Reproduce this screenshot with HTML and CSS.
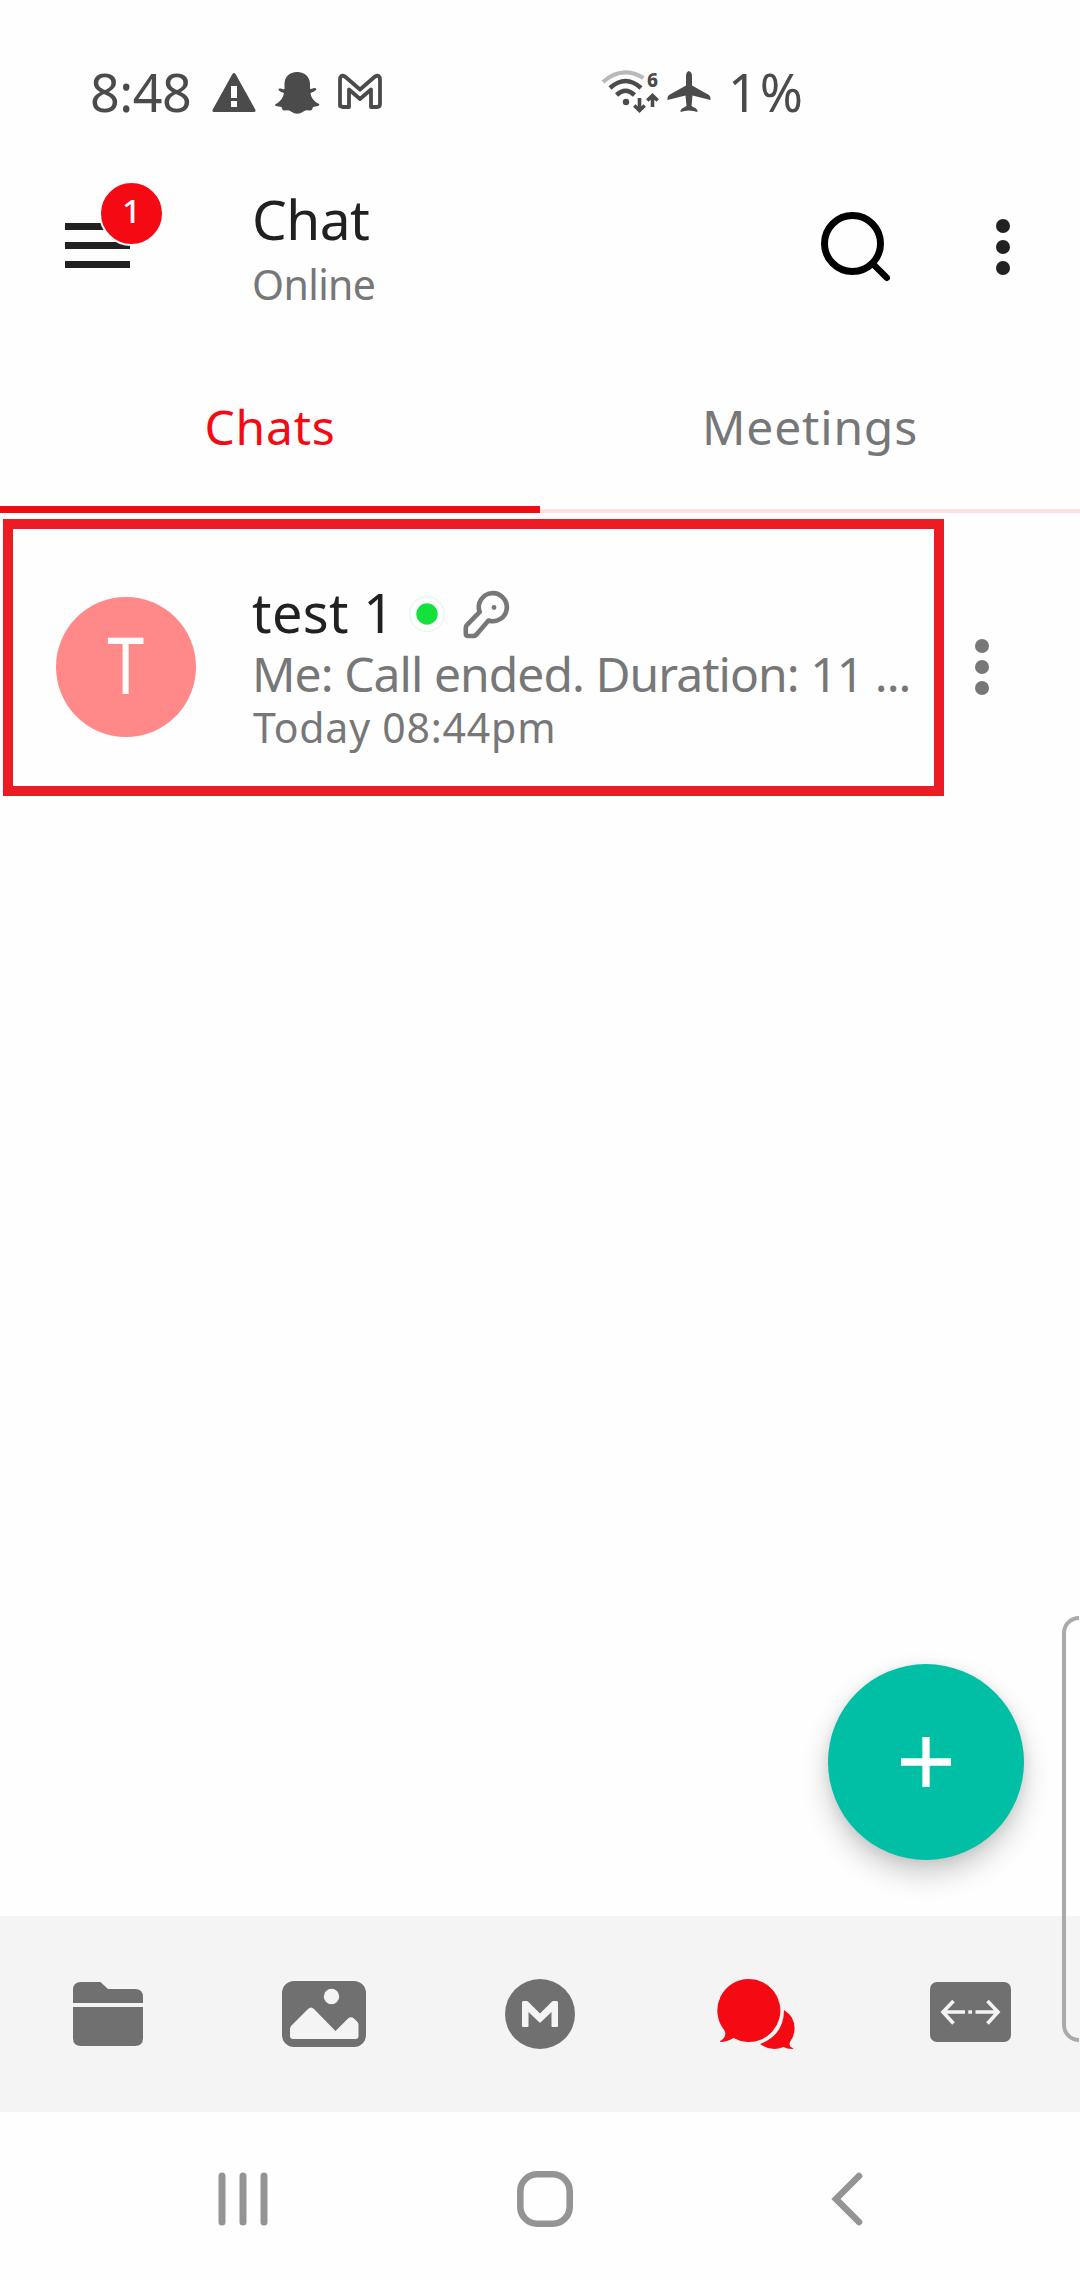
FILE: index.html
```
<!DOCTYPE html>
<html lang="en">
<head>
<meta charset="utf-8">
<title>Chat</title>
<link rel="stylesheet" href="styles.css">
</head>
<body>
<div class="screen">
  <div class="status">
    <span class="clock">8:48</span>
    <svg class="warn" width="44" height="42" viewBox="0 0 44 42">
      <path fill="currentColor" fill-rule="evenodd" d="M20.3 2.2Q22 -.4 23.7 2.2L43.4 37.8Q44 40 42 40H2Q0 40 .6 37.8ZM19 14V26H25V14ZM19 29V35H25V29Z"/>
    </svg>
    <svg class="snap" width="46" height="44" viewBox="0 0 46 44">
      <path fill="currentColor" d="M23.200 1C31 1 36 6 36 13V18Q38 18 40 17Q43 17 42 19Q40 21 36.500 22Q37 29 45 33Q46 34 44 35L39 36Q38 40 36 39.500Q32 38.500 29.500 40.500Q23.200 45 17 40.500Q14.500 38.500 10.500 39.500Q8.500 40 7.500 36L2 35Q0 34 2 33Q9 29 10 22Q6 21 4.500 19Q4 17 7 17.500Q9 18.500 10.500 18V13C10.500 6 15 1 23.200 1Z"/>
    </svg>
    <svg class="mail" width="46" height="38" viewBox="0 0 46 38">
      <path fill="none" stroke="currentColor" stroke-width="3.800" stroke-linejoin="round" d="M3 33V7Q3 1 8 3.500L23 16.500L38 3.500Q43 1 43 7V31Q43 34 40 34H34V16.500L23 26L12 16.500V34H6Q3 34 3 31Z"/>
    </svg>
    <svg class="wifi" width="59" height="44" viewBox="0 0 59 44">
      <g fill="none" stroke="currentColor">
        <path stroke="#b9b9b9" stroke-width="4" d="M2 12Q21 -5 42.500 8"/>
        <path stroke-width="4.500" d="M9 18Q24.500 4 40 18"/>
        <path stroke-width="4.500" d="M15.500 25Q24.500 16.500 33.500 25"/>
        <path stroke-width="3.600" d="M38.500 28V40M33.300 35.500L38.500 40.500L43.700 35.500M51.500 37V25M46.300 30.500L51.500 25.500L56.700 30.500"/>
      </g>
      <circle cx="25" cy="32" r="3.200" fill="currentColor"/>
      <text class="wifi-gen" x="46" y="17">6</text>
    </svg>
    <svg class="plane" width="46" height="44" viewBox="0 0 46 44">
      <path fill="currentColor" d="M22.800 1Q26 2 26 6V15.500L43 25Q45 26.500 44.500 30L26.500 25.500L25.500 36L30 38.500Q32 40 31.500 42Q22.800 39 14.500 42Q14 40 16 38.500L20.500 36L19.500 25.500L1.500 30Q1 26.500 3 25L20 15.500V6Q20 2 22.800 1Z"/>
    </svg>
    <span class="battery">1%</span>
  </div>

  <header class="appbar">
    <div class="menu">
      <span class="bar"></span><span class="bar"></span><span class="bar"></span>
      <span class="badge">1</span>
    </div>
    <div class="titles">
      <div class="title">Chat</div>
      <div class="subtitle">Online</div>
    </div>
    <svg class="search" width="70" height="72" viewBox="0 0 70 72">
      <g fill="none" stroke="#000" stroke-width="7">
        <circle cx="32.500" cy="32.500" r="28"/>
        <path stroke-linecap="round" stroke-width="6.400" d="M54 54L66.800 66.800"/>
      </g>
    </svg>
    <div class="dots dots-dark"><i></i><i></i><i></i></div>
  </header>

  <nav class="tabs">
    <div class="tab tab-active">Chats</div>
    <div class="tab">Meetings</div>
  </nav>

  <main class="list">
    <div class="row">
      <div class="chat">
        <div class="avatar"><span class="initial">T</span></div>
        <div class="info">
          <div class="name-line">
            <span class="name">test 1</span>
            <svg class="presence" width="36" height="38" viewBox="0 0 36 38">
              <ellipse cx="18" cy="19" rx="17.300" ry="17.300" fill="none" stroke="#c5f5ce" stroke-width=".7"/>
              <circle cx="18" cy="19" r="10.700" fill="#12e23b"/>
            </svg>
            <svg class="key" width="50" height="50" viewBox="0 0 50 50">
              <path fill="none" stroke="#777" stroke-width="4.600" stroke-linejoin="round" d="M17.500 21.500A14 14 0 1 1 26.500 30.500L14.500 44.500Q13 46 11.500 46H6Q3.800 46 3.800 43.500V37.500Q3.800 36 5 34.800L17.800 21.800Z"/>
              <circle cx="32" cy="17.500" r="2.400" fill="#777"/>
            </svg>
          </div>
          <div class="message">Me: Call ended. Duration: 11 ...</div>
          <div class="time">Today 08:44pm</div>
        </div>
      </div>
      <div class="dots dots-grey"><i></i><i></i><i></i></div>
    </div>
  </main>

  <nav class="bottom">
    <div class="item">
      <svg width="70" height="64" viewBox="0 0 70 64">
        <path fill="currentColor" d="M0 21V8Q0 0 8 0H27.500L35 7H62Q70 7 70 15V21ZM0 25H70V56Q70 64 62 64H8Q0 64 0 56Z"/>
      </svg>
    </div>
    <div class="item">
      <svg width="84" height="66" viewBox="0 0 84 66">
        <rect width="84" height="66" rx="12" fill="currentColor"/>
        <circle cx="49.500" cy="15.500" r="7.700" fill="#f4f4f4"/>
        <path fill="#f4f4f4" d="M8 48Q8 46 9.500 44.500L26 28Q29 25 32 28L53.500 50L66 37.500Q69 35 72 37.500L75.500 41Q76.500 42 76.500 44V55Q76.500 58 73.500 58H11Q8 58 8 55Z"/>
      </svg>
    </div>
    <div class="item">
      <svg width="70" height="70" viewBox="0 0 70 70">
        <circle cx="35" cy="35" r="35" fill="currentColor"/>
        <path fill="#f4f4f4" d="M17 23.500Q17 22 18.500 22H21.500Q22.500 22 23.500 23L35 34.500L46.500 23Q47.500 22 48.500 22H51.500Q53 22 53 23.500V47Q53 48 52 48H47.500Q46.500 48 46.500 47V33L36 43Q35 44 34 43L23.500 33V47Q23.500 48 22.500 48H18Q17 48 17 47Z"/>
      </svg>
    </div>
    <div class="item item-active">
      <svg width="78" height="70" viewBox="0 0 78 70">
        <path fill="currentColor" d="M32 0A31.500 31.500 0 1 1 16.500 59Q10 63 3 63Q2.500 62 5 61Q10 57 7.500 51.500A31.500 31.500 0 0 1 32 0ZM67 31Q78 38 77.500 50Q77.500 57 73 63Q71.500 68 76 69Q77 70 75 70Q70 70 66.500 68Q54 73 43 65Q67 56 67 31Z"/>
      </svg>
    </div>
    <div class="item">
      <svg width="81" height="60" viewBox="0 0 81 60">
        <rect width="81" height="60" rx="7" fill="currentColor"/>
        <path fill="none" stroke="#f4f4f4" stroke-width="3.600" d="M35 30H13M23.500 19L13 30L23.500 41.500M38.300 30H42M45.500 30H68M57.500 19L68 30L57.500 41.500"/>
      </svg>
    </div>
  </nav>

  <footer class="system">
    <svg width="50" height="54" viewBox="0 0 50 54">
      <path stroke="currentColor" stroke-width="7" stroke-linecap="round" d="M4 4V50M25 4V50M46 4V50"/>
    </svg>
    <svg width="58" height="58" viewBox="0 0 58 58">
      <rect x="4.300" y="4.300" width="49.400" height="49.400" rx="17" fill="none" stroke="currentColor" stroke-width="6.600"/>
    </svg>
    <svg width="32" height="54" viewBox="0 0 32 54">
      <path fill="none" stroke="currentColor" stroke-width="6.600" stroke-linecap="round" d="M28 4L5 27L28 50"/>
    </svg>
  </footer>

  <button class="fab" aria-label="New chat">
    <svg width="50" height="50" viewBox="0 0 50 50"><path stroke="#fff" stroke-width="7.300" d="M25 0V50M0 25H50"/></svg>
  </button>
  <div class="edge"></div>
</div>
</body>
</html>
```
FILE: styles.css
```
* { box-sizing: border-box; }
body { margin: 0; background: #fff; font-family: "Noto Sans", "Open Sans", sans-serif; font-weight: 400; }
svg { display: block; flex: none; }
.screen { position: relative; display: flex; flex-direction: column; width: 1080px; height: 2280px; overflow: hidden; background: #fefefe; }

.status { display: flex; align-items: center; height: 160px; padding: 24px 0 0 90px; color: #4b4b4b; font-size: 52px; line-height: 60px; }
.clock { width: 122px; letter-spacing: -.5px; }
.warn { margin-top: 1px; }
.snap { margin: 1px 0 0 18px; }
.mail { margin-left: 17px; }
.wifi { margin-left: 218px; overflow: visible; }
.wifi-gen { font-size: 19px; font-weight: 800; fill: currentColor; }
.plane { margin-left: 6px; }
.battery { margin-left: 16px; letter-spacing: 2px; }

.appbar { display: flex; align-items: flex-start; height: 200px; color: #212121; }
.menu { position: relative; display: flex; flex-direction: column; gap: 12px; width: 65px; margin: 63px 0 0 65px; }
.bar { height: 7px; background: #212121; }
.badge { position: absolute; left: 34px; top: -42px; width: 65px; height: 65px; border: 2px solid #fefefe; border-radius: 50%; background: #f50a14; color: #fff; font-size: 33px; font-weight: 500; line-height: 56px; text-align: center; }
.titles { flex: 1; margin: 26px 0 0 122px; }
.title { font-size: 55px; line-height: 66px; letter-spacing: -.5px; }
.subtitle { font-size: 41px; line-height: 64px; letter-spacing: -.6px; color: #777; }
.search { margin-top: 51px; }
.dots { display: flex; flex-direction: column; gap: 7px; width: 14px; }
.dots i { height: 14px; border-radius: 50%; background: currentColor; }
.dots-dark { margin: 59px 70px 0 106px; }
.dots-grey { margin: 120px 0 0 31px; color: #777; }

.tabs { display: grid; grid-template-columns: 1fr 1fr; height: 153px; box-shadow: inset 0 -4px #fde0e1; }
.tab { padding-top: 37px; font-size: 48px; line-height: 60px; letter-spacing: .8px; text-align: center; color: #777; }
.tab-active { color: #f50a14; border-bottom: 7px solid #f50a14; }

.list { flex: 1; padding: 6px 0 0 3px; }
.row { display: flex; align-items: flex-start; }
.chat { display: flex; width: 941px; height: 277px; padding: 52px 0 0 43px; border: 10px solid #ed1c24; }
.avatar { display: flex; align-items: center; justify-content: center; width: 140px; height: 140px; margin-top: 16px; border-radius: 50%; background: #ff8989; color: #fff; }
.initial { font-size: 78px; line-height: 80px; transform: scaleX(.85); margin-top: -6px; }
.info { margin-left: 56px; color: #777; white-space: nowrap; }
.name-line { display: flex; align-items: center; height: 62px; }
.name { width: 157px; font-size: 54px; line-height: 62px; letter-spacing: .4px; color: #212121; }
.presence { margin-top: 4px; }
.key { margin-left: 17px; margin-top: 5px; }
.message { font-size: 48px; line-height: 62px; letter-spacing: -.95px; }
.time { padding-left: 1px; font-size: 41px; line-height: 44px; letter-spacing: .8px; }

.bottom { display: grid; grid-template-columns: repeat(5, 1fr); align-items: center; height: 196px; background: #f4f4f4; color: #707070; }
.item { display: flex; justify-content: center; }
.item:last-child { padding: 0 3px 4px 0; }
.item-active { color: #f50a14; }

.system { display: grid; grid-template-columns: repeat(3, 302px); align-items: center; justify-items: center; height: 168px; padding: 6px 0 0 92px; color: #949494; }

.fab { position: absolute; left: 828px; top: 1664px; display: flex; align-items: center; justify-content: center; width: 196px; height: 196px; padding: 0; border: 0; border-radius: 50%; background: #00bfa5; box-shadow: 0 14px 28px rgba(0, 0, 0, .2), 0 2px 12px rgba(0, 0, 0, .08); }
.edge { position: absolute; left: 1062px; top: 1616px; width: 17px; height: 426px; border: 4px solid #aaa; border-right: 0; border-radius: 17px 0 0 17px; background: rgba(255, 255, 255, .15); }
```
